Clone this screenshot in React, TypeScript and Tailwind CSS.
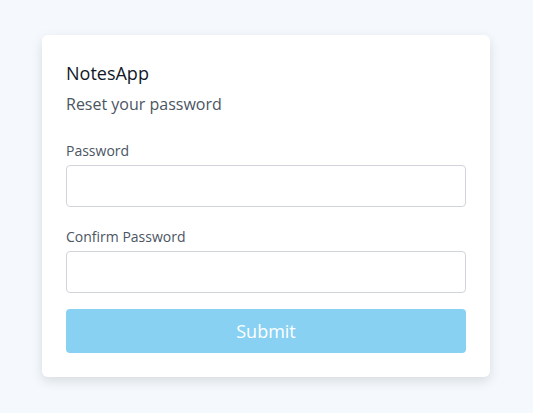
import React from 'react';

export default function App() {
  return (
    <div
      className="flex min-h-screen items-start justify-center bg-[#f5f9fd] pt-[35px] pr-px"
      style={{ fontFamily: '"Open Sans", "Noto Sans", sans-serif' }}
    >
      <div className="w-[448px] rounded-md bg-white p-6 shadow-[0_4px_12px_rgba(0,0,0,0.12)]">
        <h1 className="text-[18px] leading-7 text-[#111827]">NotesApp</h1>
        <p className="mt-[5px] text-[16px] leading-6 text-[#4b5563]">Reset your password</p>

        <form className="flex flex-col" onSubmit={(e) => e.preventDefault()}>
          <label className="mt-[25px] text-[14px] leading-5 text-[#4b5563]">Password</label>
          <input
            type="password"
            className="mt-1 h-[42px] w-full rounded border border-[#d1d5db] bg-white px-3 outline-none"
          />

          <label className="mt-5 text-[14px] leading-5 text-[#4b5563]">Confirm Password</label>
          <input
            type="password"
            className="mt-1 h-[42px] w-full rounded border border-[#d1d5db] bg-white px-3 outline-none"
          />

          <button
            type="submit"
            className="mt-4 h-[44px] w-full rounded bg-[#89d1f3] text-[18px] text-white"
          >
            Submit
          </button>
        </form>
      </div>
    </div>
  );
}
